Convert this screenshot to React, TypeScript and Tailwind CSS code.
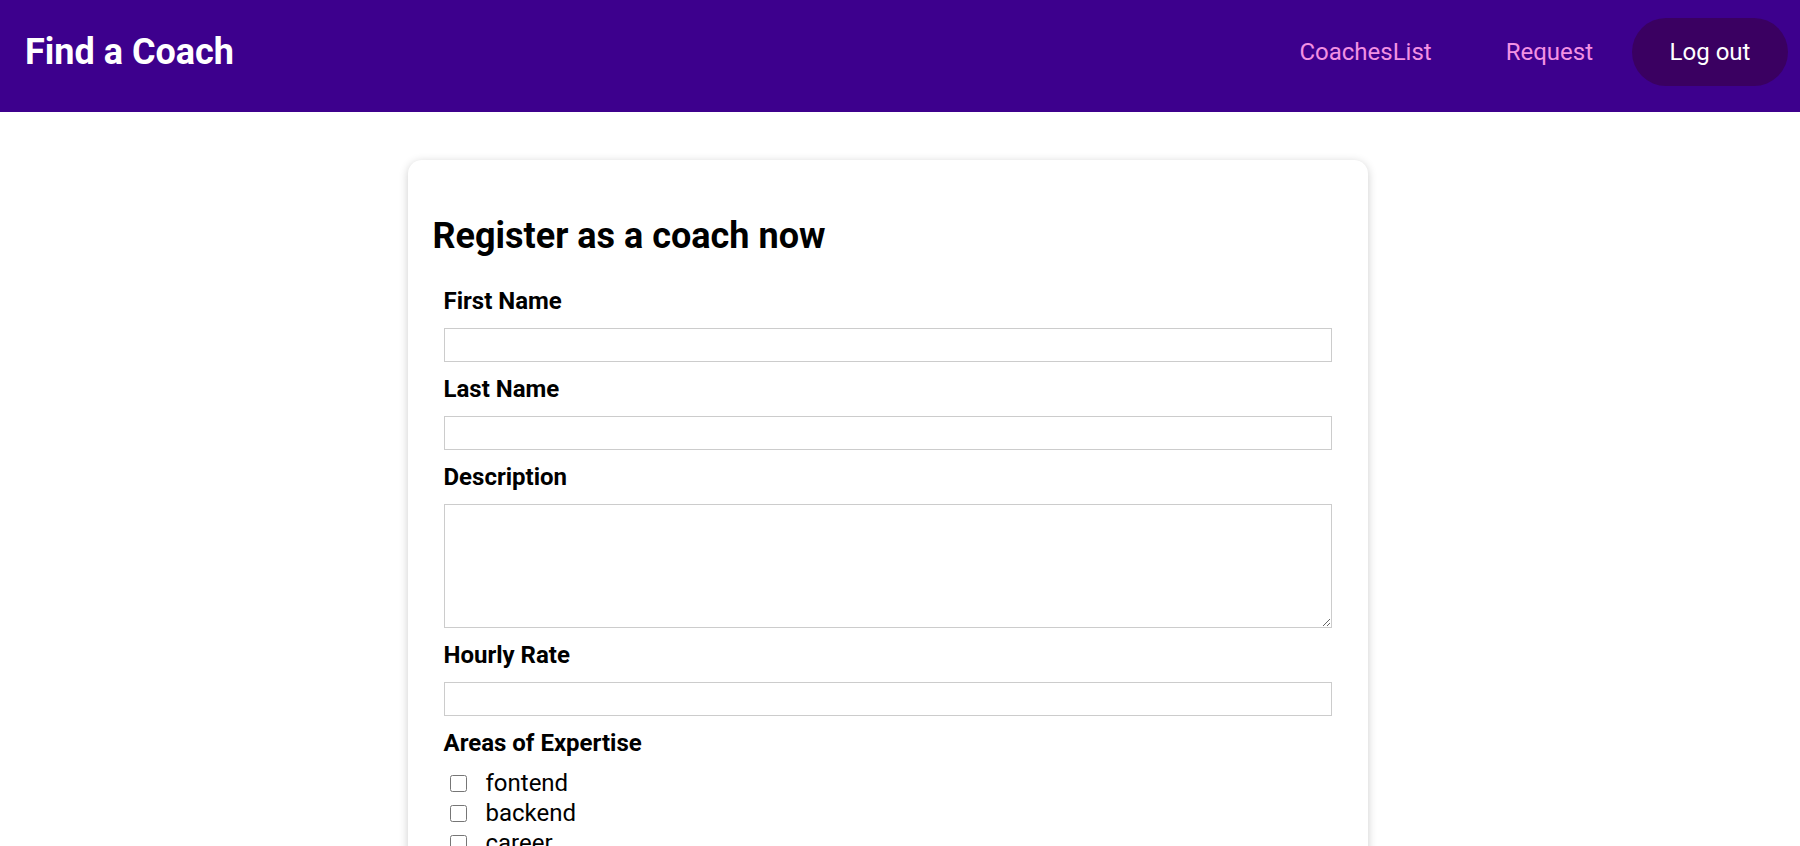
import { useState } from "react";

const areas = [
  { id: "frontend", label: "fontend" },
  { id: "backend", label: "backend" },
  { id: "career", label: "career" },
];

// Simple label + input pair used by the register form.
function Field({ id, label, area }: { id: string; label: string; area?: boolean }) {
  return (
    <div className="mb-[14px]">
      <label htmlFor={id} className="mb-[14px] block text-[24px] font-bold leading-[26px]">
        {label}
      </label>
      {area ? (
        <textarea
          id={id}
          className="block h-[124px] w-full border border-[#ccc] px-1 text-[22px] outline-none"
        />
      ) : (
        <input
          id={id}
          type="text"
          className="block h-[34px] w-full border border-[#ccc] px-1 text-[22px] outline-none"
        />
      )}
    </div>
  );
}

export default function App() {
  const [checked, setChecked] = useState<Record<string, boolean>>({});

  return (
    <div className="min-h-screen bg-white font-['Roboto',sans-serif] text-black">
      <header className="flex h-[112px] items-center justify-between bg-[#3d008d] pb-[8px] pl-[25px] pr-[12px]">
        <h1 className="text-[36px] font-bold leading-none text-white">Find a Coach</h1>
        <nav className="flex items-center">
          <a href="#" className="px-[44px] text-[24px] text-[#f391e3]">
            CoachesList
          </a>
          <a href="#" className="pl-[30px] pr-[39px] text-[24px] text-[#f391e3]">
            Request
          </a>
          <button
            type="button"
            className="flex h-[68px] w-[156px] items-center justify-center rounded-full bg-[#3a0061] text-[24px] text-white"
          >
            Log out
          </button>
        </nav>
      </header>

      <main className="flex justify-center pt-[48px]">
        <section className="ml-[-25px] w-[960px] rounded-[14px] bg-white px-[25px] pt-[54px] pb-[30px] shadow-[0_2px_10px_rgba(0,0,0,0.2)]">
          <h2 className="mb-[30px] text-[36px] font-bold leading-[44px]">Register as a coach now</h2>
          <form className="px-[11px]" onSubmit={(e) => e.preventDefault()}>
            <Field id="firstname" label="First Name" />
            <Field id="lastname" label="Last Name" />
            <Field id="description" label="Description" area />
            <Field id="rate" label="Hourly Rate" />
            <div>
              <h3 className="mb-[12px] text-[24px] font-bold leading-[26px]">Areas of Expertise</h3>
              {areas.map((a) => (
                <div key={a.id} className="flex h-[30px] items-center pl-[6px]">
                  <input
                    id={a.id}
                    type="checkbox"
                    checked={!!checked[a.id]}
                    onChange={(e) => setChecked({ ...checked, [a.id]: e.target.checked })}
                    className="h-[17px] w-[17px]"
                  />
                  <label htmlFor={a.id} className="ml-[19px] text-[24px]">
                    {a.label}
                  </label>
                </div>
              ))}
            </div>
          </form>
        </section>
      </main>
    </div>
  );
}
